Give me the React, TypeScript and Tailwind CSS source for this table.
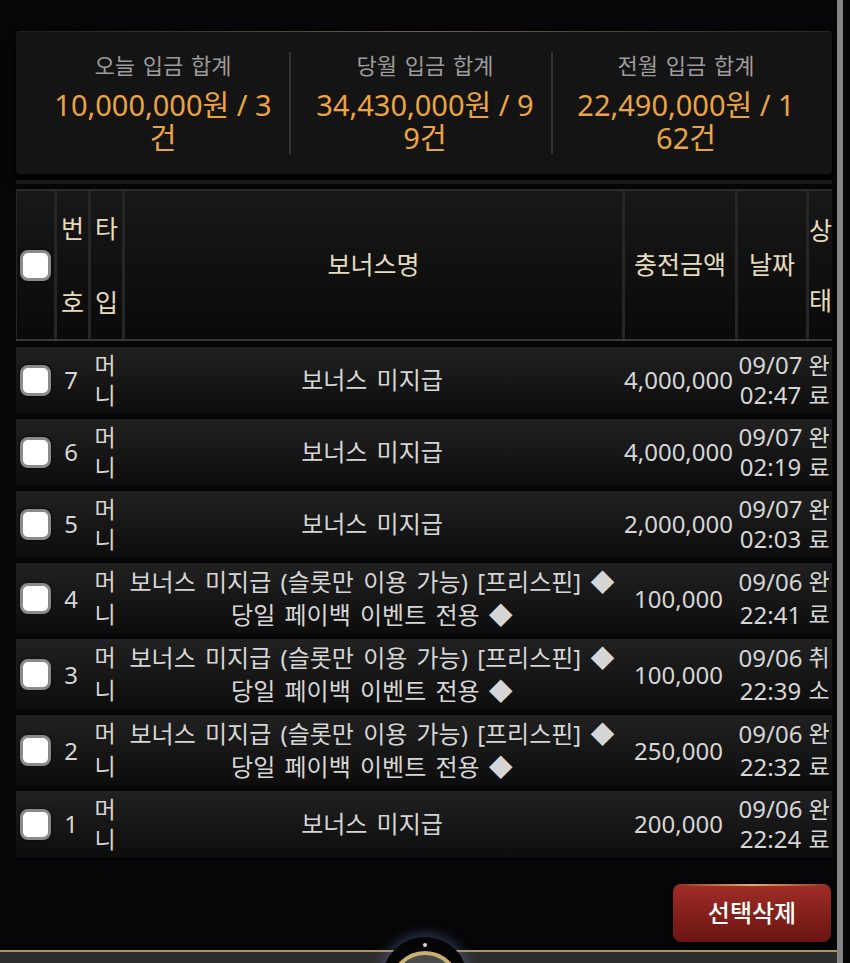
const font = "font-['Noto_Sans','Noto_Sans_CJK_KR',sans-serif]";

const summary = [
  { label: "오늘 입금 합계", lines: ["10,000,000원 / 3", "건"] },
  { label: "당월 입금 합계", lines: ["34,430,000원 / 9", "9건"] },
  { label: "전월 입금 합계", lines: ["22,490,000원 / 1", "62건"] },
];

const longName = ["보너스 미지급 (슬롯만 이용 가능) [프리스핀] ◆", "당일 페이백 이벤트 전용 ◆"];

const rows = [
  { no: 7, name: ["보너스 미지급"], amount: "4,000,000", date: "09/07", time: "02:47", status: "완료" },
  { no: 6, name: ["보너스 미지급"], amount: "4,000,000", date: "09/07", time: "02:19", status: "완료" },
  { no: 5, name: ["보너스 미지급"], amount: "2,000,000", date: "09/07", time: "02:03", status: "완료" },
  { no: 4, name: longName, amount: "100,000", date: "09/06", time: "22:41", status: "완료" },
  { no: 3, name: longName, amount: "100,000", date: "09/06", time: "22:39", status: "취소" },
  { no: 2, name: longName, amount: "250,000", date: "09/06", time: "22:32", status: "완료" },
  { no: 1, name: ["보너스 미지급"], amount: "200,000", date: "09/06", time: "22:24", status: "완료" },
];

const cols = "grid grid-cols-[38px_34px_34px_500px_113px_71px_26px]";

function Checkbox() {
  return (
    <span className="block w-[31px] h-[31px] rounded-[8px] bg-white border-[3px] border-[#8a8a8a] shadow-[0_0_3px_rgba(0,0,0,0.9)]" />
  );
}

function Stack({ items }: { items: string[] }) {
  return (
    <div className="flex flex-col items-center">
      {items.map((t, i) => (
        <span key={i} className="whitespace-nowrap">
          {t}
        </span>
      ))}
    </div>
  );
}

export default function App() {
  return (
    <div className={`${font} h-[963px] overflow-hidden bg-[#060507] flex`}>
      <div className="flex-1 min-w-0 flex flex-col">
        <div className="pl-4 pr-[5px] pt-[31px]">
          {/* summary */}
          <div className="rounded-[4px] bg-[#151414] shadow-[0_6px_8px_rgba(0,0,0,0.9)] overflow-hidden">
            <div className="h-[1px] bg-linear-to-r from-[#1e1c1a] via-[#6a604c] to-[#2a2620]" />
            <div className="grid grid-cols-[252px_262px_268px] h-[142px] pl-[21px] pr-[13px]">
              {summary.map((s, i) => (
                <div key={i} className="flex">
                  {i > 0 && <div className="w-[2px] bg-[#343232] my-[20px]" />}
                  <div className={`flex-1 flex flex-col items-center pt-[19px] ${i === 1 ? "pl-[8px]" : ""}`}>
                    <div className="text-[22px] leading-[28px] text-[#9c9c9c] [word-spacing:2px]">{s.label}</div>
                    <div className="mt-[9px] text-[29px] leading-[33px] text-[#eba444] flex flex-col items-center">
                      {s.lines.map((l, j) => (
                        <span key={j} className="whitespace-nowrap">
                          {l}
                        </span>
                      ))}
                    </div>
                  </div>
                </div>
              ))}
            </div>
          </div>

          {/* table header */}
          <div className="mt-[6px] h-[4px] bg-[#1b191b]" />
          <div className="mt-[5px] border-t-2 border-[#2a2a2a] border-b-2 border-b-[#383838]">
            <div className={`${cols} h-[148px] bg-linear-to-b from-[#181818] to-[#0b0a0b] text-[25px] text-[#e6dcbd]`}>
              <div className="flex items-center justify-center border-l border-[#262626]">
                <Checkbox />
              </div>
              <div className="border-l-[3px] border-[#262626] flex flex-col items-center justify-center leading-[74px]">
                <span>번</span>
                <span>호</span>
              </div>
              <div className="border-l-[3px] border-[#262626] flex flex-col items-center justify-center leading-[74px]">
                <span>타</span>
                <span>입</span>
              </div>
              <div className="border-l-[3px] border-[#262626] flex items-center justify-center">보너스명</div>
              <div className="border-l-[3px] border-[#262626] flex items-center justify-center">충전금액</div>
              <div className="border-l-[3px] border-[#262626] flex items-center justify-center">날짜</div>
              <div className="border-l-[3px] border-[#262626] flex flex-col items-center justify-center leading-[70px]">
                <span>상</span>
                <span>태</span>
              </div>
            </div>
          </div>

          {/* rows */}
          <div className="mt-[6px] flex flex-col gap-[6px] text-[#d6d6d6]">
            {rows.map((r) => {
              const tall = r.name.length > 1;
              return (
                <div
                  key={r.no}
                  className={`${cols} ${tall ? "h-[70px] leading-[33px]" : "h-[66px] leading-[30px]"} bg-linear-to-b from-[#212121] to-[#0d0d0d] items-center`}
                >
                  <div className="flex items-center justify-center">
                    <Checkbox />
                  </div>
                  <div className="text-center text-[24px]">{r.no}</div>
                  <div className="text-[23px]">
                    <Stack items={["머", "니"]} />
                  </div>
                  <div className="text-[24px] [word-spacing:3px]">
                    <Stack items={r.name} />
                  </div>
                  <div className="text-center text-[24px] whitespace-nowrap">{r.amount}</div>
                  <div className="text-[24px]">
                    <Stack items={[r.date, r.time]} />
                  </div>
                  <div className="text-[23px]">
                    <Stack items={[r.status[0], r.status[1]]} />
                  </div>
                </div>
              );
            })}
          </div>

          {/* actions */}
          <div className="flex justify-end mt-[27px] pr-[1px]">
            <button className="relative w-[158px] h-[58px] rounded-[8px] bg-linear-to-b from-[#a12d27] to-[#6a1511] text-white text-[24px] font-medium shadow-[0_2px_4px_rgba(0,0,0,0.8)] overflow-hidden">
              <span className="absolute top-0 left-0 right-0 h-[2px] bg-linear-to-r from-[#8a2a22] via-[#e0b070] to-[#8a2a22]" />
              선택삭제
            </button>
          </div>
        </div>

        {/* bottom nav */}
        <div className="relative mt-[8px] h-[13px] border-t-2 border-[#b0955a] bg-[#2e2e2e]">
          <div className="absolute left-[382px] top-[-15px] w-[86px] h-[86px] rounded-full bg-[#050505] shadow-[0_-2px_14px_rgba(110,140,210,0.45)]">
            <span className="absolute left-[41px] top-[6px] w-[4px] h-[4px] rounded-full bg-[#d8d8d8]" />
            <div className="absolute left-[8px] top-[14px] w-[70px] h-[70px] rounded-full border-[4px] border-[#c9b06e] bg-[#4a4a4a]" />
          </div>
        </div>
      </div>
      <div className="w-[6px] shrink-0 bg-[#858585]" />
      <div className="w-[7px] shrink-0 bg-[#050505]" />
    </div>
  );
}
